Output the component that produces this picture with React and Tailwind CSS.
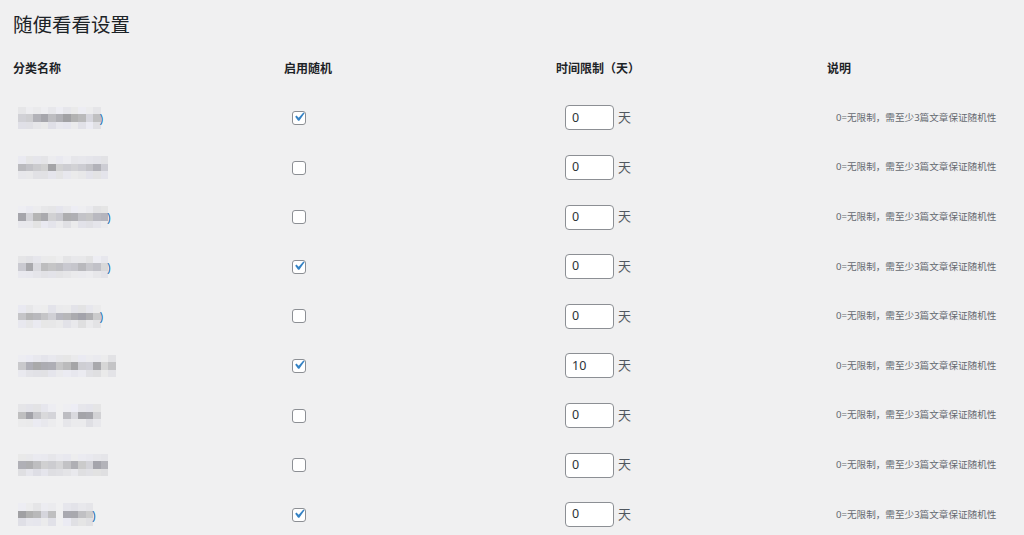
import React from 'react'

const ROWS = [
  { cells: 11, paren: true, checked: true, days: '0', seed: 3 },
  { cells: 12, paren: false, checked: false, days: '0', seed: 11 },
  { cells: 12, paren: true, checked: false, days: '0', seed: 19 },
  { cells: 12, paren: true, checked: true, days: '0', seed: 27 },
  { cells: 11, paren: true, checked: false, days: '0', seed: 35 },
  { cells: 13, paren: false, checked: true, days: '10', seed: 43 },
  { cells: 11, paren: false, checked: false, days: '0', seed: 51, gap: 5 },
  { cells: 12, paren: false, checked: false, days: '0', seed: 59 },
  { cells: 10, paren: true, checked: true, days: '0', seed: 67, gap: 5 },
]

const DESC = '0=无限制，需至少3篇文章保证随机性'

// small seeded random so the mosaic stays the same on every render
function rand(seed) {
  let s = seed
  return () => {
    s = (s * 9301 + 49297) % 233280
    return s / 233280
  }
}

function gray(r, lo, hi) {
  const v = Math.round(lo + (hi - lo) * r())
  const b = Math.min(255, v + Math.round(r() * 8))
  return `rgb(${v},${v},${b})`
}

function Mosaic({ cells, seed, gap, paren }) {
  const r = rand(seed)
  const bands = [
    [226, 238],
    [160, 218],
    [222, 236],
  ]
  return (
    <div className="flex items-center">
      <div className="flex flex-col">
        {bands.map(([lo, hi], b) => (
          <div key={b} className="flex">
            {Array.from({ length: cells }).map((_, i) => (
              <div
                key={i}
                className="w-[7.5px] h-[7.5px]"
                style={{ backgroundColor: gap === i ? '#f0f0f1' : gray(r, lo, hi) }}
              />
            ))}
          </div>
        ))}
      </div>
      {paren && <span className="text-[12px] leading-none text-[#2271b1] -ml-[1px] mt-[2px]">)</span>}
    </div>
  )
}

function Checkbox({ checked }) {
  return (
    <div className="w-[14px] h-[14px] rounded-[3px] border border-[#8c8f94] bg-white flex items-center justify-center overflow-visible">
      {checked && (
        <svg width="18" height="18" viewBox="0 0 20 20" className="shrink-0 -mt-[1px]">
          <path d="M14.83 4.89l1.34.94-5.81 8.38H9.02L5.78 9.67l1.34-1.25 2.57 2.4z" fill="#3582c4" />
        </svg>
      )}
    </div>
  )
}

export default function App() {
  return (
    <div
      className="min-h-[535px] bg-[#f0f0f1] pl-[13px] pt-[11px] overflow-hidden"
      style={{ fontFamily: '"Noto Sans", "Noto Sans CJK SC", sans-serif' }}
    >
      <h1 className="text-[19.5px] leading-[28px] font-normal text-[#1d2327]">随便看看设置</h1>

      <div className="grid grid-cols-[271px_272px_271px_1fr] h-[54.2px] pt-[21px] text-[12px] leading-[18px] font-bold text-[#1d2327]">
        <div>分类名称</div>
        <div>启用随机</div>
        <div>时间限制（天）</div>
        <div>说明</div>
      </div>

      {ROWS.map((row, idx) => (
        <div key={idx} className="grid grid-cols-[271px_272px_271px_1fr] h-[49.6px] items-center">
          <div className="pl-[5px]">
            <Mosaic cells={row.cells} seed={row.seed} gap={row.gap} paren={row.paren} />
          </div>
          <div className="pl-[8px]">
            <Checkbox checked={row.checked} />
          </div>
          <div className="pl-[9px] flex items-center gap-[4px]">
            <div className="w-[49px] h-[25px] rounded-[4px] border border-[#8c8f94] bg-white px-[6px] flex items-center text-[12.5px] text-[#2c3338]">
              {row.days}
            </div>
            <span className="text-[13px] text-[#50575e]">天</span>
          </div>
          <div className="pl-[9px] text-[9.6px] text-[#646970] whitespace-nowrap">{DESC}</div>
        </div>
      ))}
    </div>
  )
}
